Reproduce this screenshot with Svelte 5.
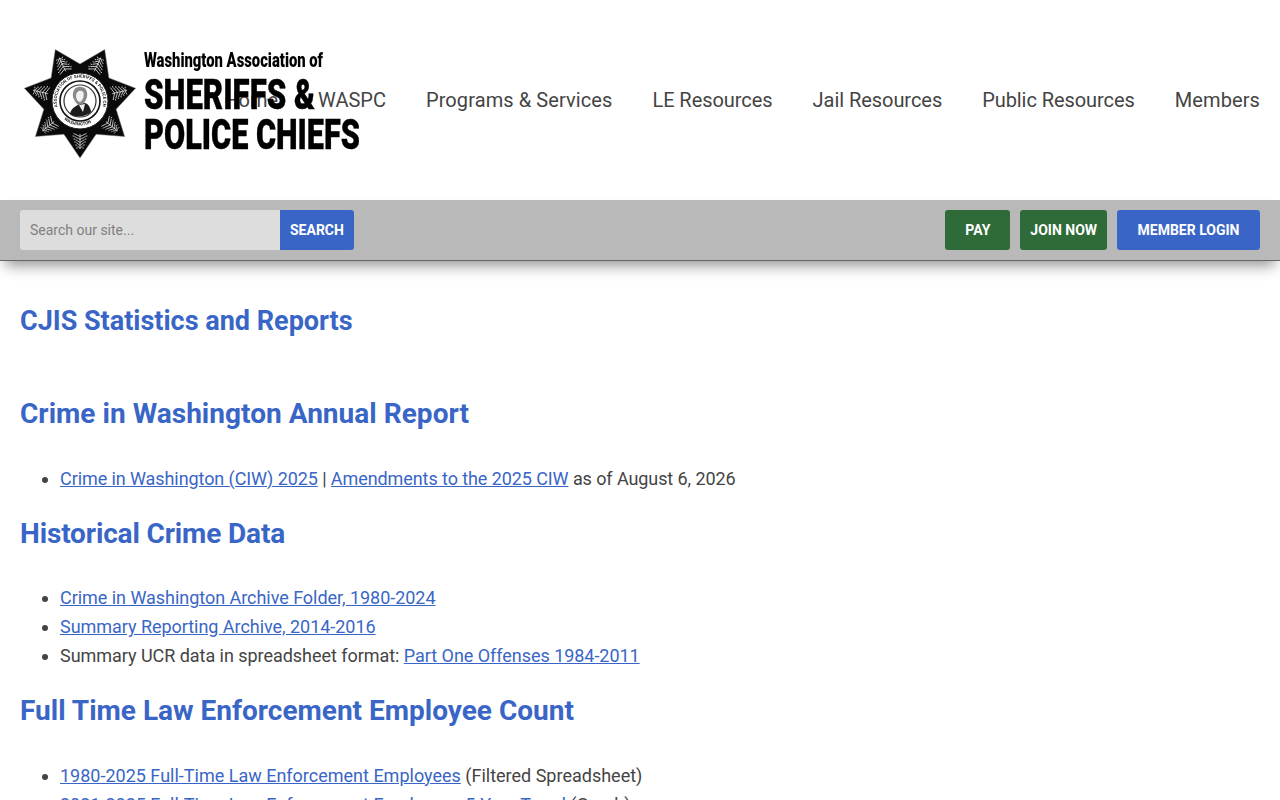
<script>
  const navLinks = ['Home', 'WASPC', 'Programs & Services', 'LE Resources', 'Jail Resources', 'Public Resources', 'Members'];

  // star geometry, seven points around the seal
  const cx = 80;
  const cy = 101;
  const points = [];
  for (let i = 0; i < 14; i++) {
    const a = (Math.PI * i) / 7 + Math.PI / 2;
    const r = i % 2 === 0 ? 57 : 37;
    points.push(`${(cx + r * Math.cos(a)).toFixed(1)},${(cy + r * Math.sin(a)).toFixed(1)}`);
  }
  const star = points.join(' ');
  const sprigs = [0, 1, 2, 3, 4, 5, 6].map((i) => (360 / 7) * i);

  // one leafy sprig, pointing down from the seal
  let sprig = `M${cx} ${cy + 33}v15`;
  for (let i = 0; i < 5; i++) {
    const y = cy + 34 + i * 3;
    const w = 6.5 - i * 0.9;
    sprig += `M${cx - w} ${y - 1.5}l${w} 3l${w} -3`;
    sprig += `M${cx - w - 1} ${y + 1}h1.6M${cx + w - 0.6} ${y + 1}h1.6`;
  }
</script>

<header class="site-header">
  <a href="#home" class="logo" aria-label="Washington Association of Sheriffs and Police Chiefs">
    <svg width="345" height="120" viewBox="20 40 345 120">
      <defs>
        <path id="seal-top" d="M{cx - 22.5} {cy + 6}a23.3 23.3 0 1 1 45 0" />
        <path id="seal-bottom" d="M{cx - 16} {cy + 18.5}a24.8 24.8 0 0 0 32 0" />
      </defs>

      <polygon points={star} fill="#0a0a0a" stroke="#777" stroke-width="0.5" />
      {#each sprigs as deg}
        <path class="sprig" transform="rotate({deg} {cx} {cy})" d={sprig} />
      {/each}

      <circle cx={cx} cy={cy} r="28" fill="#fff" stroke="#222" stroke-width="1" />
      <text class="seal-text"><textPath href="#seal-top">ASSOCIATION OF SHERIFFS &amp; POLICE CHIEFS</textPath></text>
      <text class="seal-text"><textPath href="#seal-bottom">WASHINGTON</textPath></text>
      <circle cx={cx} cy={cy} r="20" fill="#fff" stroke="#111" stroke-width="1.6" />
      <circle cx={cx} cy={cy} r="16" fill="#fff" stroke="#333" stroke-width="1.2" />

      <!-- portrait -->
      <path d="M{cx - 10} {cy + 13}c1 -6 6 -8 10 -10c4 -2 7 -1 9 2c1 2 2 4 2 6c-5 5 -16 6 -21 2z" fill="#1c1c1c" />
      <path d="M{cx - 1} {cy + 4}l4 7l2 -8z" fill="#eee" />
      <path d="M{cx - 7} {cy - 4}c-1 -7 3 -11 8 -10c5 0 7 5 6 10c-1 3 -2 5 -4 7l-5 1c-2 -2 -4 -5 -5 -8z" fill="#8a8a8a" />
      <path d="M{cx - 4} {cy - 5}c0 -4 3 -6 6 -5c3 1 2 9 -2 11c-2 0 -4 -3 -4 -6z" fill="#f2f2f2" />

      <text class="logo-small" x="144" y="67" textLength="179" lengthAdjust="spacingAndGlyphs">Washington Association of</text>
      <text class="logo-big" x="144" y="109" textLength="171" lengthAdjust="spacingAndGlyphs">SHERIFFS &amp;</text>
      <text class="logo-big" x="144" y="149" textLength="216" lengthAdjust="spacingAndGlyphs">POLICE CHIEFS</text>
    </svg>
  </a>

  <nav class="main-nav">
    {#each navLinks as link}
      <a href="#nav" class="nav-link">{link}</a>
    {/each}
  </nav>
</header>

<div class="tool-bar">
  <form class="search">
    <input type="text" placeholder="Search our site..." />
    <button type="button" class="btn blue search-btn">SEARCH</button>
  </form>
  <div class="actions">
    <a href="#pay" class="btn green">PAY</a>
    <a href="#join" class="btn green">JOIN NOW</a>
    <a href="#login" class="btn blue">MEMBER LOGIN</a>
  </div>
</div>

<main class="content">
  <h1>CJIS Statistics and Reports</h1>

  <h2 class="first">Crime in Washington Annual Report</h2>
  <ul class="tight-more">
    <li><a href="#ciw">Crime in Washington (CIW) 2025</a> | <a href="#amend">Amendments to the 2025 CIW</a> as of August 6, 2026</li>
  </ul>

  <h2 class="tight">Historical Crime Data</h2>
  <ul class="tight-less">
    <li><a href="#archive">Crime in Washington Archive Folder, 1980-2024</a></li>
    <li><a href="#summary">Summary Reporting Archive, 2014-2016</a></li>
    <li>Summary UCR data in spreadsheet format: <a href="#part">Part One Offenses 1984-2011</a></li>
  </ul>

  <h2>Full Time Law Enforcement Employee Count</h2>
  <ul>
    <li><a href="#emp">1980-2025 Full-Time Law Enforcement Employees</a> (Filtered Spreadsheet)</li>
    <li><a href="#trend">2021-2025 Full-Time Law Enforcement Employees 5-Year Trend</a> (Graph)</li>
  </ul>
</main>

<style>
  :global(body) {
    font-family: Roboto, sans-serif;
    color: #444;
    background: #fff;
  }

  /* Header */
  .site-header {
    display: grid;
    height: 200px;
    align-items: center;
    padding: 0 20px;
  }

  .logo,
  .main-nav {
    grid-area: 1 / 1;
  }

  .logo {
    display: block;
    width: 345px;
    height: 120px;
  }

  .logo svg {
    display: block;
    filter: blur(0.35px);
  }

  .sprig {
    fill: none;
    stroke: #dcdcdc;
    stroke-width: 0.8;
  }

  .seal-text {
    font-family: Roboto, sans-serif;
    font-size: 4.3px;
    font-weight: 700;
    fill: #222;
    letter-spacing: 0.1px;
  }

  .logo-small {
    font-family: Roboto, sans-serif;
    font-size: 20px;
    font-weight: 900;
    fill: #000;
  }

  .logo-big {
    font-family: Roboto, sans-serif;
    font-size: 42px;
    font-weight: 900;
    fill: #000;
    stroke: #000;
    stroke-width: 0.4px;
  }

  .main-nav {
    display: flex;
    justify-content: flex-end;
    gap: 40px;
  }

  .nav-link {
    font-size: 20px;
    color: #444;
    text-decoration: none;
  }

  .nav-link:nth-child(3) {
    letter-spacing: 0.09px;
  }

  .nav-link:nth-child(4),
  .nav-link:nth-child(5) {
    letter-spacing: -0.05px;
  }

  .nav-link:nth-child(6) {
    letter-spacing: -0.07px;
  }

  .nav-link:nth-child(7) {
    letter-spacing: 0.1px;
  }

  /* Search and action bar */
  .tool-bar {
    display: flex;
    justify-content: space-between;
    height: 61px;
    box-sizing: border-box;
    padding: 10px 20px;
    background: #b9b9b9;
    border-bottom: 1px solid #666;
    box-shadow: 0 9px 14px -5px rgba(0, 0, 0, 0.45);
  }

  .search {
    display: flex;
    margin: 0;
  }

  .search input {
    width: 260px;
    height: 40px;
    box-sizing: border-box;
    padding: 0 10px;
    border: 0;
    border-radius: 3px 0 0 3px;
    background: #ddd;
    font-family: Roboto, sans-serif;
    font-size: 14px;
  }

  .search input::placeholder {
    color: #808080;
  }

  .actions {
    display: flex;
    gap: 10px;
  }

  .btn {
    display: flex;
    align-items: center;
    height: 40px;
    box-sizing: border-box;
    padding: 0 20px;
    border: 0;
    border-radius: 3px;
    color: #fff;
    font-family: Roboto, sans-serif;
    font-size: 14px;
    font-weight: 700;
    text-decoration: none;
  }

  .search-btn {
    padding: 0 10px;
    border-radius: 0 3px 3px 0;
  }

  .actions .btn:nth-child(2) {
    padding: 0 10px;
  }

  .actions .btn:nth-child(3) {
    padding: 0 20.5px;
  }

  .blue {
    background: #3966c6;
  }

  .green {
    background: #2e6b38;
  }

  /* Page content */
  .content {
    padding: 0 20px;
    font-size: 18px;
    line-height: 29px;
  }

  h1,
  h2 {
    margin: 0;
    color: #3966c6;
    font-size: 28px;
    font-weight: 700;
    line-height: 36px;
  }

  h1 {
    padding-top: 42px;
    font-size: 27px;
  }

  h2 {
    margin-top: 22.9px;
  }

  h2.first {
    margin-top: 57.3px;
    letter-spacing: 0.03px;
  }

  h2.tight {
    letter-spacing: -0.14px;
  }

  ul {
    margin: 31.6px 0 0;
    padding-left: 40px;
  }

  .tight-more {
    letter-spacing: -0.085px;
  }

  .tight-less {
    letter-spacing: -0.04px;
  }

  .content a {
    color: #3966c6;
  }
</style>
